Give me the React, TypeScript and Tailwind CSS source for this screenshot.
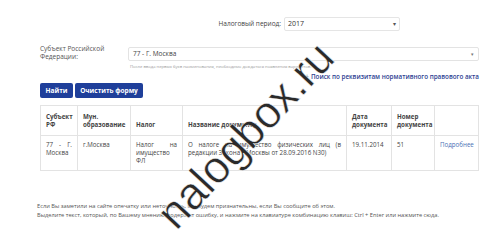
import React from "react";

export default function App() {
  const cell = "border border-[#e3e3e3] px-[5px] py-[5px] align-top";
  const head = "border border-[#e3e3e3] px-[5px] pt-[5px] pb-[6px] align-bottom text-left font-bold h-[30px]";
  return (
    <div className="relative w-[500px] h-[241px] overflow-hidden bg-white text-[#333] text-[6.5px] leading-[8px]" style={{ fontFamily: "'Open Sans', 'Liberation Sans', sans-serif" }}>
      <div className="pl-[40px] pr-[21px] pt-[17px]">
        <div className="flex items-center justify-end pr-[79px] gap-[3px]">
          <span className="text-[6.5px] text-[#444]">Налоговый период:</span>
          <div className="w-[116px] h-[14px] border border-[#e5e5e5] rounded-[2px] flex items-center justify-between px-[3px]">
            <span className="text-[7px] text-[#333]">2017</span>
            <span className="text-[6px] text-[#555]">▾</span>
          </div>
        </div>
        <div className="flex mt-[16px]">
          <div className="w-[88px] text-[6.5px] leading-[8px] text-[#555] -mt-[2px]">Субъект Российской Федерации:</div>
          <div className="flex-1">
            <div className="h-[14px] border border-[#e3e3e3] rounded-[2px] flex items-center justify-between px-[4px]">
              <span className="text-[6.5px] text-[#444]">77 - Г. Москва</span>
              <span className="text-[5px] text-[#777]">▾</span>
            </div>
            <div className="mt-[3px] ml-[2px] text-[4.2px] leading-[5px] text-[#999]">После ввода первых букв наименования, необходимо дождаться появления вариантов.</div>
            <div className="mt-[4px] flex justify-end text-[6.3px] font-semibold text-[#2c3e91]">
              <span className="text-[#999] mr-[2px]">+</span>Поиск по реквизитам нормативного правового акта
            </div>
          </div>
        </div>
        <div className="flex gap-[2px] mt-[2px]">
          <button className="h-[15px] w-[33px] shrink-0 bg-[#1f3f9a] text-white text-[6.5px] font-bold rounded-[2px]">Найти</button>
          <button className="h-[15px] w-[68px] shrink-0 bg-[#1f3f9a] text-white text-[6.5px] font-bold rounded-[2px]">Очистить форму</button>
        </div>
        <table className="mt-[7px] w-[439px] table-fixed border-collapse text-[6.2px] leading-[8px] text-[#444]">
          <colgroup>
            <col className="w-[37px]" />
            <col className="w-[53px]" />
            <col className="w-[52px]" />
            <col className="w-[164px]" />
            <col className="w-[45px]" />
            <col className="w-[43px]" />
            <col />
          </colgroup>
          <thead>
            <tr>
              <th className={head}>Субъект РФ</th>
              <th className={head}>Мун. образование</th>
              <th className={head}>Налог</th>
              <th className={head}>Название документа</th>
              <th className={head}>Дата документа</th>
              <th className={head}>Номер документа</th>
              <th className={head}></th>
            </tr>
          </thead>
          <tbody>
            <tr>
              <td className={cell + " h-[33px] text-justify"} style={{ textAlignLast: "left" }}>77 - Г. Москва</td>
              <td className={cell}>г.Москва</td>
              <td className={cell + " text-justify"} style={{ textAlignLast: "left" }}>Налог на имущество ФЛ</td>
              <td className={cell + " text-justify"} style={{ textAlignLast: "left" }}>О налоге на имущество физических лиц (в редакции Закона г.Москвы от 28.09.2016 N30)</td>
              <td className={cell}>19.11.2014</td>
              <td className={cell}>51</td>
              <td className={cell + " text-[#4a6fb5]"}>Подробнее</td>
            </tr>
          </tbody>
        </table>
        <div className="mt-[31px] -ml-[3px] text-[5.7px] leading-[9px] text-[#555]">
          <div>Если Вы заметили на сайте опечатку или неточность, мы будем признательны, если Вы сообщите об этом.</div>
          <div>Выделите текст, который, по Вашему мнению, содержит ошибку, и нажмите на клавиатуре комбинацию клавиш: Ctrl + Enter или нажмите сюда.</div>
        </div>
        <div className="mt-[24px] -ml-[3px] h-px bg-[#e6e6e6]"></div>
      </div>
      <div className="pointer-events-none absolute left-[245px] top-[135px] -translate-x-1/2 -translate-y-1/2 -rotate-[47deg] text-[45px] leading-none text-[#2a2a2a] whitespace-nowrap" style={{ fontFamily: "'Liberation Sans', sans-serif", WebkitTextStroke: "0.5px white" }}>
        nalogbox.ru
      </div>
    </div>
  );
}
